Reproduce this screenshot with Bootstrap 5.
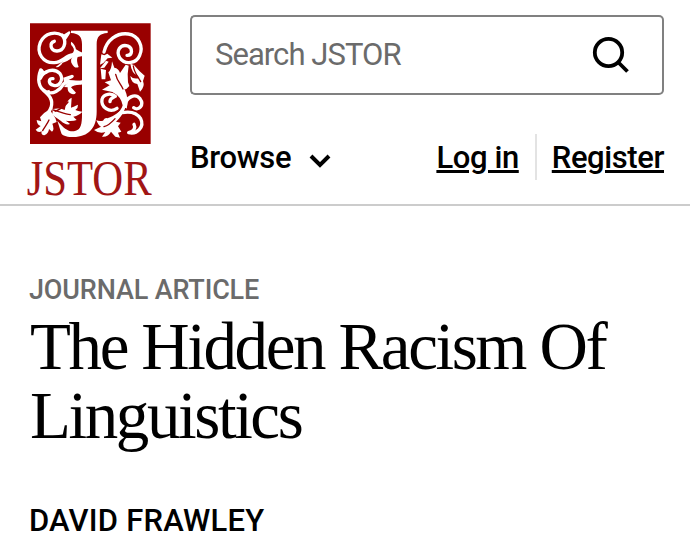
<!DOCTYPE html>
<html lang="en">
<head>
    <meta charset="UTF-8">
    <meta name="viewport" content="width=device-width, initial-scale=1.0">
    <title>The Hidden Racism Of Linguistics on JSTOR</title>
    <link href="https://cdn.jsdelivr.net/npm/bootstrap@5.3.3/dist/css/bootstrap.min.css" rel="stylesheet">
    <style>
      body { font-family: Roboto, "Liberation Sans", sans-serif; color: #000; }
      .site-header { height: 206px; padding: 15px 26px 0 20px; border-bottom: 2px solid #ccc; }
      .logo { width: 140px; margin-right: 30px; }
      .logo svg { overflow: visible; }
      .search-box { height: 80px; }
      .search-box .form-control, .search-box .btn { border: 2px solid #808080; border-radius: 5px; }
      .search-box .form-control { font-size: 31px; letter-spacing: -.95px; padding: 0 23px; border-right: 0; }
      .search-box .form-control::placeholder { color: #6b6b6b; opacity: 1; }
      .search-box .btn { width: 108px; border-left: 0; }
      .search-box svg { margin-left: 4px; }
      .site-nav { height: 46px; margin-top: 39px; font-size: 31px; font-weight: 500; line-height: 48px; letter-spacing: -.35px; }
      .site-nav a { color: #000; }
      .browse { height: 48px; }
      .browse svg { margin: 6px 0 0 17px; }
      .account a { text-decoration-thickness: 3px; text-underline-offset: 2px; letter-spacing: -.4px; }
      .account a + a { margin-left: 16px; padding-left: 15px; border-left: 2px solid #e3e3e3; }
      .article { padding: 66px 30px 0 29px; }
      .kind { font-size: 27px; line-height: 37px; font-weight: 500; color: #6b6b6b; letter-spacing: -.15px; }
      .title { font-family: "Liberation Serif", serif; font-size: 67px; line-height: 69px; font-weight: 400; letter-spacing: -2.4px; margin: 3px 0 0 1px; }
      .author { font-size: 31px; line-height: 40px; font-weight: 500; margin-top: 51px; letter-spacing: .2px; }
    </style>
</head>
<body class="bg-white">

  <header class="site-header d-flex">
    <a class="logo flex-shrink-0" href="#" aria-label="JSTOR Home">
      <svg class="d-block" width="140" height="187" viewBox="0 0 420 561">
        <path fill="#900" d="M30 25h362v362H30z"/>
        <!-- initial -->
        <path fill="#fff" d="M153 47H263V54C239 56 230 65 230 88V290C230 340 205 365 160 366C142 367 125 363 123 352L112 317C132 341 147 352 165 348C183 345 186 325 186 300V88C186 65 177 56 153 54Z"/>
        <g fill="none" stroke="#fff" stroke-width="10" stroke-linecap="round" stroke-linejoin="round">
          <path d="M127 61C108 49 75 52 61 82C48 115 70 145 103 143C129 142 136 121 158 120"/>
          <path d="M127 61C143 84 130 109 110 108C91 106 87 84 103 79"/>
          <path d="M62 165C52 190 54 218 77 230C99 241 120 225 130 208C144 191 162 207 184 201"/>
          <path d="M61 190C72 165 103 158 120 176C132 193 119 216 101 211C83 207 85 188 99 191"/>
          <path d="M71 226C86 240 101 253 93 278C87 293 78 302 73 314"/>
          <path d="M252 111C260 75 291 52 325 57C356 62 371 94 359 121C350 145 316 151 300 130C286 108 301 86 324 93C339 100 338 122 321 121"/>
          <path d="M283 198C307 213 323 240 314 270C307 294 291 306 274 322"/>
          <path d="M316 274C316 246 346 234 360 251C374 270 356 289 341 278"/>
          <path d="M291 280C268 296 242 276 246 253C251 235 275 234 286 244C278 248 269 250 270 260"/>
          <path d="M306 293C327 289 350 292 362 311C374 335 352 359 326 353C344 348 347 337 342 328"/>
        </g>
        <g fill="#fff">
          <path d="M128 61L147 49Q155 50 147 61L137 76ZM61 165Q64 154 72 168L84 174L65 184ZM130 188L156 179Q166 181 158 189L132 202Z"/>
          <path d="M107 156Q134 137 137 126L155 116Q167 107 158 95Q150 88 154 80Q165 88 168 103Q178 110 188 113Q193 120 185 124L173 126Q168 137 176 156Q164 163 154 143Q151 133 158 127Q140 142 128 143Q118 159 107 156Z"/>
          <path d="M132 216Q145 193 188 198Q193 204 184 209Q161 208 153 217L168 233Q162 242 151 235Q142 230 143 217ZM76 229L88 224L93 236L82 240Z"/>
          <path d="M91 261Q102 286 96 299L122 317Q139 332 150 327Q143 319 137 317Q160 319 170 315L160 305Q178 301 187 290Q173 289 166 285Q175 278 174 269Q159 276 153 278L155 248Q144 253 138 268L134 285Q119 278 99 282Z"/>
          <path d="M89 283Q74 291 60 307L64 319L50 315Q51 330 62 333L47 344Q54 355 65 349Q62 360 73 361Q86 355 87 342L96 350Q104 343 97 326L110 321Q107 307 99 299Z"/>
          <path d="M244 118L253 121L262 116L277 128L263 130L250 144L240 149ZM258 137L266 140L253 158L240 160ZM242 161L258 165L256 193H245Z"/>
          <path d="M276 139L283 158Q296 160 300 174L317 149L326 152Q321 177 324 202L328 213Q317 227 309 222Q328 251 320 281L308 271Q304 245 277 231L246 224L269 211L254 202L273 196L265 172Q275 164 276 139Z"/>
          <path d="M331 146Q335 175 352 181L358 189Q340 194 331 183Q333 204 352 207L360 230Q376 215 369 198L374 182L359 169L342 150Z"/>
          <path d="M300 288Q278 306 262 310Q254 307 249 317Q236 320 229 315Q234 331 243 335L222 345Q239 358 256 351L246 365Q264 367 273 350L286 365L300 368L294 353L304 350L294 334L302 323L288 320Q305 305 311 288Z"/>
        </g>
        <g fill="none" stroke="#900" stroke-width="4" stroke-linecap="round">
          <path d="M100 285C120 290 134 298 151 299M105 289C123 282 136 272 144 261M87 315C82 327 73 337 68 347M252 335C267 331 275 322 285 311M287 178C291 198 302 206 309 222M340 153C343 175 354 184 362 200"/>
        </g>
        <text x="20" y="539" font-family="Liberation Serif, serif" font-size="149" fill="#a11515" textLength="375" lengthAdjust="spacingAndGlyphs">JSTOR</text>
      </svg>
    </a>

    <div class="flex-grow-1">
      <form class="search-box input-group flex-nowrap">
        <input type="text" class="form-control shadow-none" placeholder="Search JSTOR" aria-label="Search JSTOR">
        <button type="button" class="btn p-0" aria-label="Search">
          <svg width="38" height="38" viewBox="0 0 38 38" fill="none" stroke="#000" stroke-width="3.8">
            <circle cx="16.5" cy="16.5" r="13.7"/>
            <path d="M26 26l9.5 9.5"/>
          </svg>
        </button>
      </form>
      <nav class="site-nav d-flex justify-content-between">
        <a class="browse text-decoration-none d-flex align-items-center" href="#">Browse
          <svg width="24" height="16" viewBox="0 0 24 16" fill="none" stroke="#000" stroke-width="4"><path d="M3 3l9 9 9-9"/></svg>
        </a>
        <div class="account d-flex">
          <a href="#">Log in</a>
          <a href="#">Register</a>
        </div>
      </nav>
    </div>
  </header>

  <main class="article">
    <div class="kind">JOURNAL ARTICLE</div>
    <h1 class="title">The Hidden Racism Of Linguistics</h1>
    <div class="author">DAVID FRAWLEY</div>
  </main>

  <script src="https://cdn.jsdelivr.net/npm/bootstrap@5.3.3/dist/js/bootstrap.bundle.min.js"></script>
</body>
</html>
